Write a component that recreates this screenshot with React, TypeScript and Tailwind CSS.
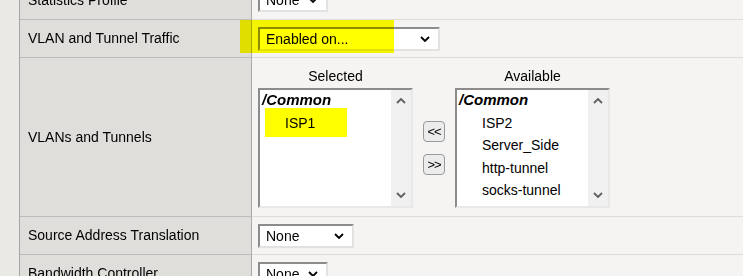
import React from "react";

function Chevron({ className = "" }: { className?: string }) {
    return (
        <svg width="10" height="6" viewBox="0 0 10 6" className={className}>
            <path d="M1 1 L5 5 L9 1" fill="none" stroke="currentColor" strokeWidth="1.8" />
        </svg>
    );
}

function Select({ value, width }: { value: string; width: string }) {
    return (
        <div className={`${width} h-[24px] bg-white border-2 border-t-[#8c8c8c] border-l-[#8c8c8c] border-r-[#e2e2e2] border-b-[#e2e2e2] flex items-center justify-between pl-[6px] pr-[8px]`}>
            <span className="leading-none">{value}</span>
            <Chevron className="text-black" />
        </div>
    );
}

function ListBox({ items, highlight }: { items: string[]; highlight?: boolean }) {
    return (
        <div className="relative w-[155px] h-[120px] bg-white border-2 border-t-[#8c8c8c] border-l-[#8c8c8c] border-r-[#e8e8e8] border-b-[#e8e8e8] flex">
            <div className="flex-1 -mt-[1px] leading-[22.5px]">
                <div className="pl-[2px] font-bold italic text-[15px]">/Common</div>
                {items.map((it) => (
                    <div key={it} className="pl-[25px]">{it}</div>
                ))}
            </div>
            <div className="w-[20px] bg-[#f0f0f0] flex flex-col items-center justify-between py-[8px] text-[#606060]">
                <Chevron className="rotate-180" />
                <Chevron />
            </div>
            {highlight && (
                <div className="absolute left-[5px] top-[18px] w-[82px] h-[29px] bg-[#ffff00] mix-blend-multiply" />
            )}
        </div>
    );
}

function MoveButton({ label }: { label: string }) {
    return (
        <div className="w-[22px] h-[21px] rounded-[4px] border border-[#9a9a9a] bg-[#ececec] flex items-center justify-center text-[13px] leading-none tracking-[-1px]">
            {label}
        </div>
    );
}

function Row({ label, height, children }: { label: string; height: string; children: React.ReactNode }) {
    return (
        <div className={`grid grid-cols-[232px_1fr] ${height}`}>
            <div className="bg-[#dfdedb] border-r border-r-[#a9a9a9] border-b border-b-[#bcbcbc] flex items-center pl-[8px]">
                {label}
            </div>
            <div className="bg-[#f5f4f2] border-b border-b-[#dddcda] flex items-center pl-[6px]">
                {children}
            </div>
        </div>
    );
}

export default function App() {
    return (
        <div className="flex h-[276px] overflow-hidden bg-[#ebe9e6] text-[14px] text-black font-['Liberation_Sans',Arial,sans-serif]">
            <div className="w-[19px] shrink-0" />
            <div className="relative flex-1 -mt-[19px] border-l border-l-[#a5a5a5]">
                <Row label="Statistics Profile" height="h-[39px]">
                    <Select value="None" width="w-[70px]" />
                </Row>
                <Row label="VLAN and Tunnel Traffic" height="h-[38px]">
                    <Select value="Enabled on..." width="w-[182px]" />
                </Row>
                <Row label="VLANs and Tunnels" height="h-[159px]">
                    <div className="self-start pt-[9px] flex items-end gap-[10px]">
                        <div className="flex flex-col items-center">
                            <div className="h-[18px] leading-[18px] mb-[3px]">Selected</div>
                            <ListBox items={["ISP1"]} highlight />
                        </div>
                        <div className="flex flex-col gap-[12px] h-[120px] justify-center">
                            <MoveButton label="<<" />
                            <MoveButton label=">>" />
                        </div>
                        <div className="flex flex-col items-center">
                            <div className="h-[18px] leading-[18px] mb-[3px]">Available</div>
                            <ListBox items={["ISP2", "Server_Side", "http-tunnel", "socks-tunnel"]} />
                        </div>
                    </div>
                </Row>
                <Row label="Source Address Translation" height="h-[38px]">
                    <Select value="None" width="w-[96px]" />
                </Row>
                <Row label="Bandwidth Controller" height="h-[38px]">
                    <Select value="None" width="w-[70px]" />
                </Row>

                {/* highlighter mark over the traffic select */}
                <div className="absolute left-[220px] top-[39px] w-[154px] h-[33px] bg-[#ffff00] mix-blend-multiply" />
            </div>
        </div>
    );
}
